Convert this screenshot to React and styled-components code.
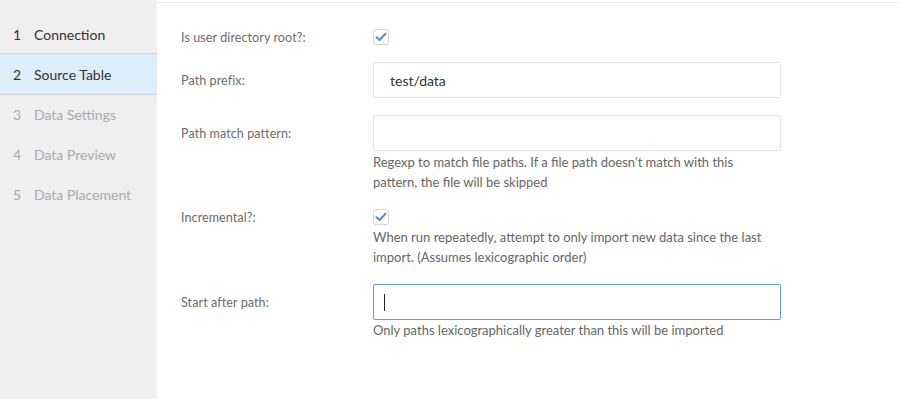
import React from "react";
import styled, { createGlobalStyle } from "styled-components";

const Global = createGlobalStyle`
  html, body { margin: 0; padding: 0; background: #fff; }
  body { font-family: Lato, "Open Sans", sans-serif; color: #333; }
  * { box-sizing: border-box; }
`;

const Page = styled.div`
  display: flex;
  width: 899px;
  height: 399px;
  overflow: hidden;
`;

const Sidebar = styled.nav`
  width: 157px;
  flex: none;
  background: #efefef;
  padding-top: 14px;
  display: flex;
  flex-direction: column;
`;

const Step = styled.div`
  display: flex;
  align-items: center;
  padding-left: 13px;
  font-size: 14px;
  color: ${(p) => (p.$disabled ? "#aaaaaa" : "#333")};
  background: ${(p) => (p.$active ? "#dcedfc" : "transparent")};
  border-top: 1px solid ${(p) => (p.$active ? "#cfd4d8" : "transparent")};
  border-bottom: 1px solid ${(p) => (p.$active ? "#cfd4d8" : "transparent")};
  margin-top: ${(p) => (p.$active ? "-1px" : "0")};
  margin-bottom: ${(p) => (p.$active ? "-1px" : "0")};
  height: ${(p) => (p.$active ? "42px" : "40px")};
`;

const Num = styled.span`
  width: 21px;
`;

const Main = styled.main`
  flex: 1;
  padding-top: 2px;
`;

const Content = styled.div`
  border-top: 1px solid #e6e6e6;
  padding: 26px 0 0 24px;
  display: flex;
  flex-direction: column;
  gap: 17px;
`;

const Row = styled.div`
  display: grid;
  grid-template-columns: 192px 408px;
`;

const Label = styled.label`
  height: ${(p) => p.$h}px;
  display: flex;
  align-items: center;
  font-size: 12.5px;
  color: #6c6c6c;
  letter-spacing: 0.1px;
`;

const Field = styled.div`
  display: flex;
  flex-direction: column;
`;

const Input = styled.div`
  height: 36px;
  flex: none;
  border: 1px solid ${(p) => (p.$focus ? "#5c9fe2" : "#e4e4e4")};
  border-radius: 2px;
  display: flex;
  align-items: center;
  padding-left: 16px;
  font-size: 14px;
  color: #333;
`;

const Caret = styled.span`
  width: 1px;
  height: 17px;
  background: #222;
  margin-left: -6px;
`;

const Box = styled.span`
  width: 16px;
  height: 16px;
  flex: none;
  border: 1px solid #d5d5d5;
  border-radius: 3px;
  display: flex;
  align-items: center;
  justify-content: center;
  background: #fff;
`;

const Help = styled.div`
  font-size: 13px;
  line-height: 20px;
  color: #666;
  margin-top: ${(p) => p.$mt || 0}px;
  width: 400px;
`;

const Check = () => (
  <Box>
    <svg width="12" height="10" viewBox="0 0 12 10">
      <path d="M1.5 5.2 L4.6 8 L10.5 1.8" fill="none" stroke="#4a8fdb" strokeWidth="2" strokeLinecap="round" strokeLinejoin="round" />
    </svg>
  </Box>
);

const steps = [
  { n: 1, t: "Connection" },
  { n: 2, t: "Source Table", active: true },
  { n: 3, t: "Data Settings", disabled: true },
  { n: 4, t: "Data Preview", disabled: true },
  { n: 5, t: "Data Placement", disabled: true },
];

export default function App() {
  return (
    <Page>
      <Global />
      <Sidebar>
        {steps.map((s) => (
          <Step key={s.n} $active={s.active} $disabled={s.disabled}>
            <Num>{s.n}</Num>
            {s.t}
          </Step>
        ))}
      </Sidebar>
      <Main>
        <Content>
          <Row>
            <Label $h={16}>Is user directory root?:</Label>
            <Field><Check /></Field>
          </Row>
          <Row>
            <Label $h={36}>Path prefix:</Label>
            <Field><Input>test/data</Input></Field>
          </Row>
          <Row>
            <Label $h={36}>Path match pattern:</Label>
            <Field>
              <Input />
              <Help $mt={1}>Regexp to match file paths. If a file path doesn't match with this pattern, the file will be skipped</Help>
            </Field>
          </Row>
          <Row>
            <Label $h={16}>Incremental?:</Label>
            <Field>
              <Check />
              <Help $mt={2}>When run repeatedly, attempt to only import new data since the last import. (Assumes lexicographic order)</Help>
            </Field>
          </Row>
          <Row>
            <Label $h={36}>Start after path:</Label>
            <Field>
              <Input $focus><Caret /></Input>
              <Help>Only paths lexicographically greater than this will be imported</Help>
            </Field>
          </Row>
        </Content>
      </Main>
    </Page>
  );
}
